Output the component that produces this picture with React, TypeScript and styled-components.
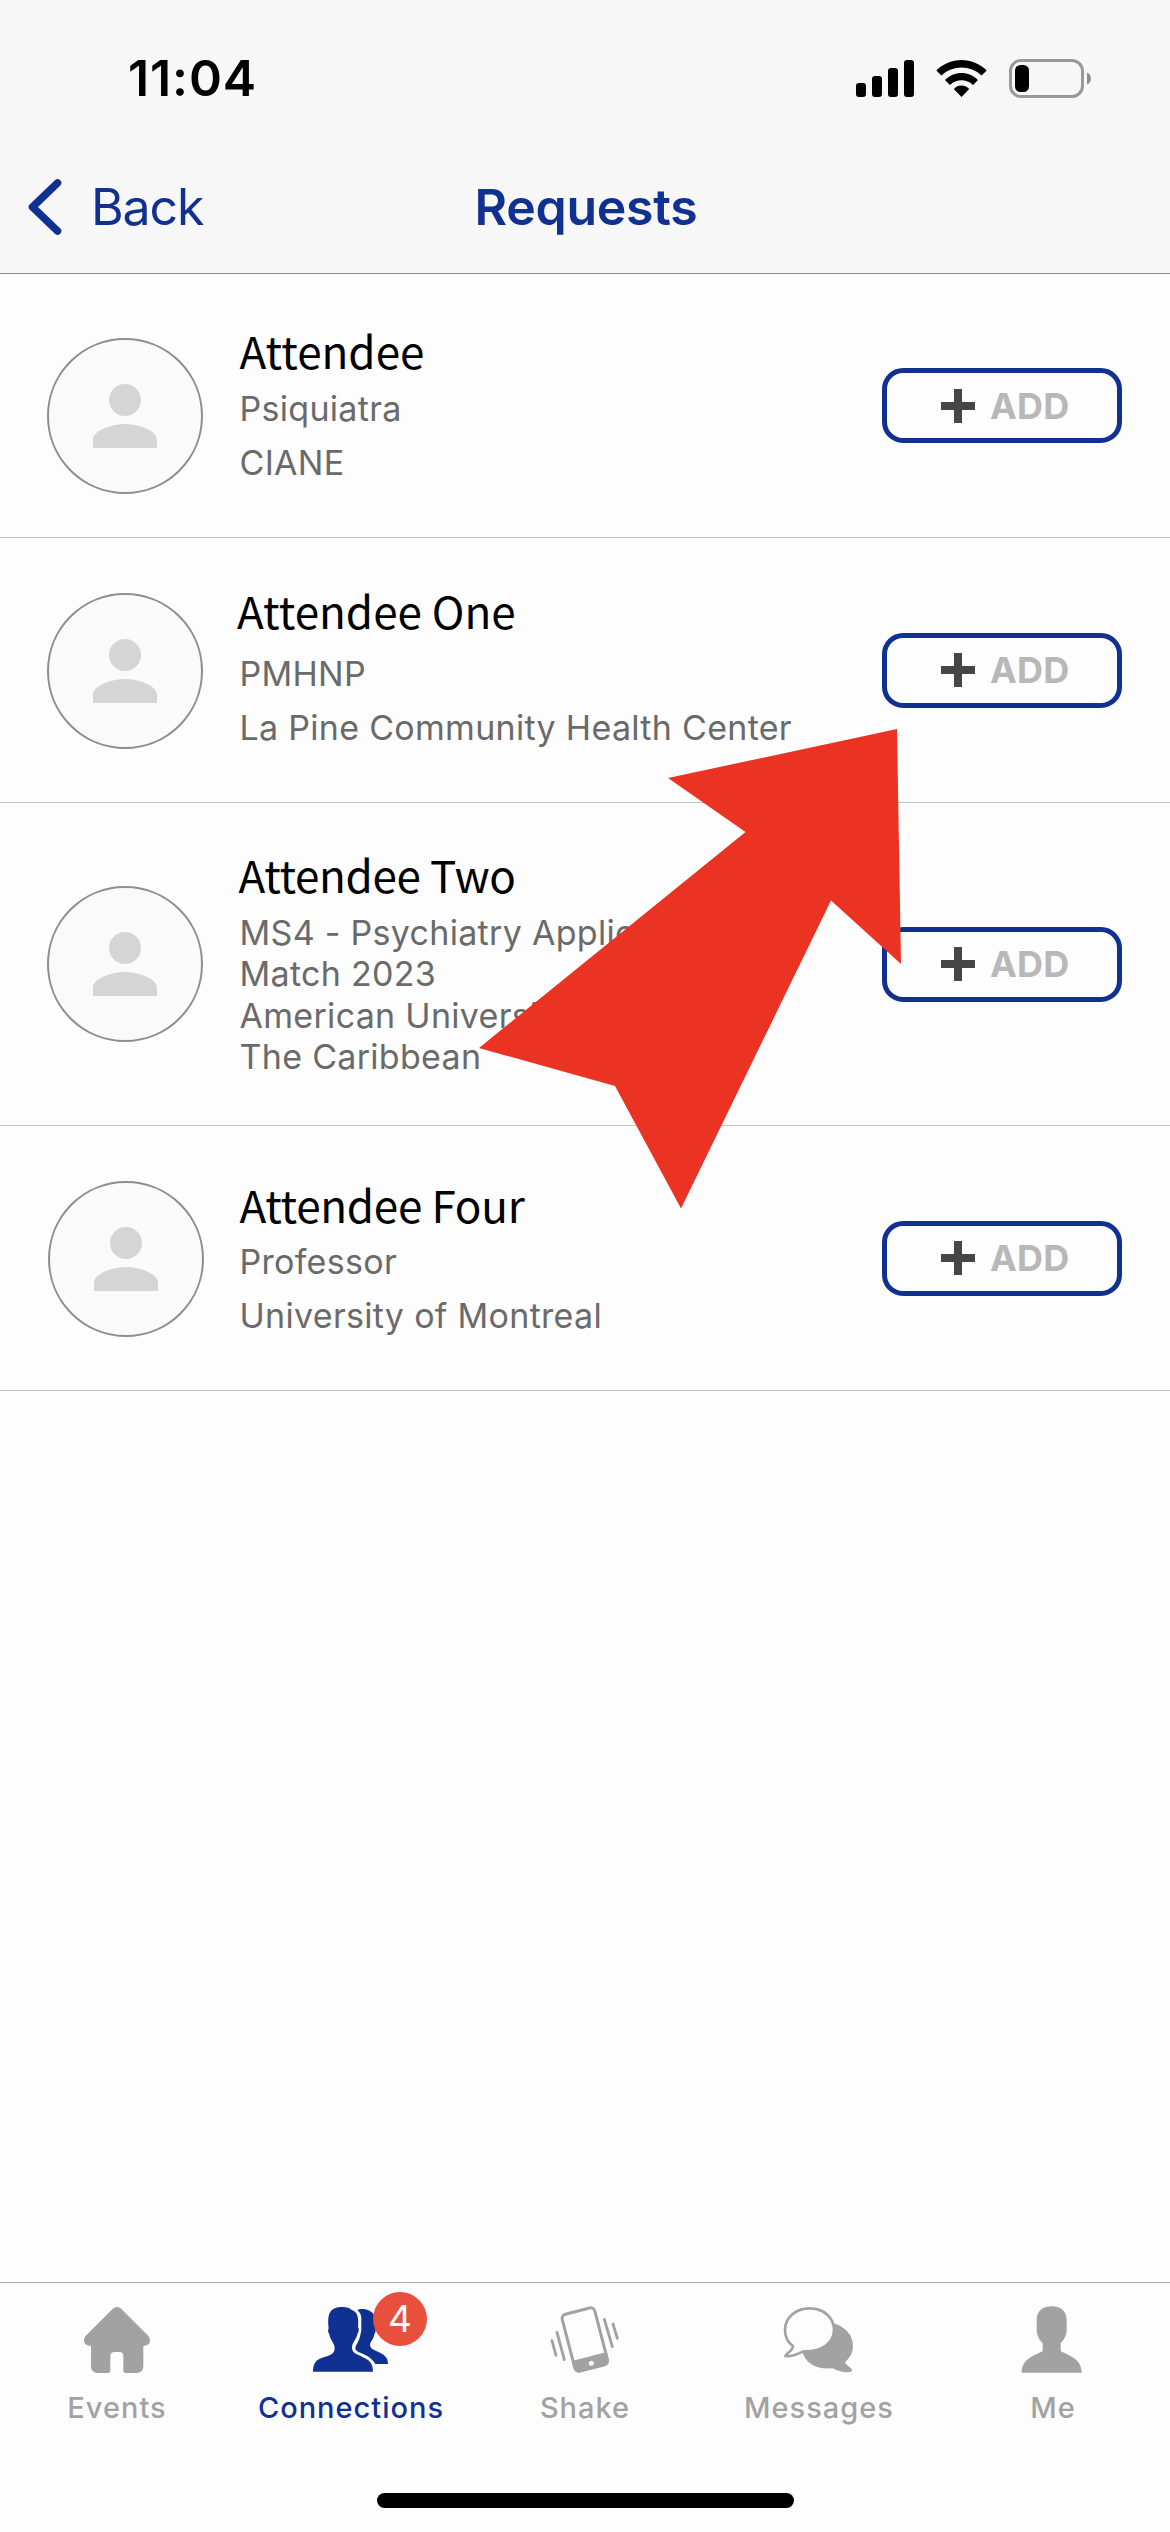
import React from "react";
import styled, { createGlobalStyle } from "styled-components";

const BLUE = "#113192";
const GREY = "#a2a2a2";

const GlobalStyle = createGlobalStyle`
  * { box-sizing: border-box; }
  body { margin: 0; background: #fdfdfd; }
`;

const Screen = styled.div`
  position: relative;
  display: flex;
  flex-direction: column;
  width: 1170px;
  height: 2532px;
  overflow: hidden;
  background: #fdfdfd;
  font-family: Inter, "Liberation Sans", sans-serif;
`;

const Header = styled.header`
  height: 274px;
  background: #f7f7f7;
  border-bottom: 1px solid #8e8e8e;
`;

const StatusBar = styled.div`
  display: flex;
  align-items: center;
  justify-content: space-between;
  height: 156px;
  padding: 0 79px 0 128px;
`;

const Clock = styled.span`
  font-size: 50px;
  font-weight: 600;
  line-height: 60px;
  letter-spacing: 0.9px;
  color: #000;
`;

const StatusIcons = styled.div`
  display: flex;
  align-items: center;
  gap: 22px;

  svg { display: block; }
`;

const NavBar = styled.nav`
  display: grid;
  grid-template-columns: 1fr auto 1fr;
  align-items: center;
  height: 102px;
  padding: 0 26px 0 28px;
`;

const BackButton = styled.button`
  display: flex;
  align-items: center;
  gap: 26px;
  padding: 0;
  border: 0;
  background: none;
  color: ${BLUE};
  font: 400 50px/60px Inter, "Liberation Sans", sans-serif;
  letter-spacing: -1.1px;
`;

const Title = styled.h1`
  margin: 0;
  font-size: 50px;
  font-weight: 600;
  line-height: 60px;
  letter-spacing: -0.25px;
  color: ${BLUE};
`;

const List = styled.main`
  flex: 1;
`;

const Row = styled.section<{ $height: number }>`
  display: flex;
  height: ${(p) => p.$height}px;
  padding-right: 48px;
  border-bottom: 1px solid #c4c4c4;
`;

const Avatar = styled.div<{ $top: number; $left: number }>`
  display: flex;
  align-items: center;
  justify-content: center;
  flex: none;
  width: 156px;
  height: 156px;
  margin: ${(p) => p.$top}px 0 0 ${(p) => p.$left}px;
  border: 2px solid #8e8e8e;
  border-radius: 50%;
  background: #fafafa;
`;

const Info = styled.div<{ $top: number; $left: number }>`
  flex: 1;
  min-width: 0;
  padding: ${(p) => p.$top}px 0 0 ${(p) => p.$left}px;
`;

const Name = styled.h2<{ $tracking: number }>`
  margin: 0;
  font-family: "Noto Sans CJK SC", "Noto Sans", sans-serif;
  font-size: 44px;
  font-weight: 400;
  line-height: 46px;
  letter-spacing: ${(p) => p.$tracking}px;
  color: #000;
`;

const Details = styled.div<{ $top: number; $left: number; $gap: number }>`
  display: flex;
  flex-direction: column;
  gap: ${(p) => p.$gap}px;
  margin: ${(p) => p.$top}px 0 0 ${(p) => p.$left}px;
`;

const Detail = styled.p`
  margin: 0;
  font-size: 34px;
  line-height: 41.5px;
  letter-spacing: 0.3px;
  white-space: pre-line;
  color: #6a6a6a;
`;

const AddButton = styled.button`
  display: flex;
  align-items: center;
  align-self: center;
  gap: 15px;
  flex: none;
  width: 240px;
  height: 75px;
  padding: 0 0 0 54px;
  border: 5px solid ${BLUE};
  border-radius: 21px;
  background: none;
  color: #b8b8b8;
  font: 700 36px/44px Inter, "Liberation Sans", sans-serif;
  letter-spacing: 0.2px;
`;

const TabBar = styled.footer`
  display: flex;
  flex-direction: column;
  justify-content: space-between;
  align-items: center;
  height: 250px;
  padding-bottom: 24px;
  border-top: 1px solid #a8a8a8;
`;

const Tabs = styled.div`
  display: grid;
  grid-template-columns: repeat(5, 1fr);
  width: 100%;
  padding-top: 20px;
`;

const Tab = styled.div<{ $active?: boolean }>`
  display: flex;
  flex-direction: column;
  align-items: center;
  gap: 9px;
  color: ${(p) => (p.$active ? BLUE : GREY)};
  font-size: 29px;
  font-weight: 500;
  line-height: 40px;
  letter-spacing: 1px;
`;

const TabIcon = styled.div`
  position: relative;
  width: 76px;
  height: 76px;

  svg { display: block; }
`;

const Badge = styled.span`
  position: absolute;
  top: -11px;
  left: 60px;
  width: 54px;
  height: 54px;
  border-radius: 50%;
  background: #e84f3d;
  color: #fff;
  font-size: 37px;
  font-weight: 400;
  line-height: 53px;
  letter-spacing: 0;
  text-align: center;
`;

const HomeIndicator = styled.div`
  width: 417px;
  height: 15px;
  border-radius: 8px;
  background: #000;
`;

const Pointer = styled.svg`
  position: absolute;
  top: 0;
  left: 0;
  pointer-events: none;
`;

const SignalIcon = () => (
  <svg width="58" height="37" viewBox="0 0 58 37">
    <rect x="0" y="23" width="10" height="14" rx="3" />
    <rect x="16" y="16" width="10" height="21" rx="3" />
    <rect x="32" y="8" width="10" height="29" rx="3" />
    <rect x="48" y="0" width="10" height="37" rx="3" />
  </svg>
);

const WifiIcon = () => (
  <svg width="51" height="37" viewBox="0 0 51 37">
    <path d="M.3 10.6C14-3.5 37-3.5 50.7 10.6L45.6 15.6C34.5 4.7 16.5 4.7 5.4 15.6Z" />
    <path d="M9 20C18 10.5 33 10.5 42 20L37 25C30.5 18.8 20.5 18.8 14 25Z" />
    <path d="M17.8 28.9C22 24.4 29 24.4 33.2 28.9L25.5 37Z" />
  </svg>
);

const BatteryIcon = () => (
  <svg width="82" height="39" viewBox="0 0 82 39">
    <rect x="1.5" y="1.5" width="72" height="36" rx="10.5" fill="none" stroke="#999" strokeWidth="3" />
    <rect x="6" y="6" width="14" height="27" rx="5.5" />
    <path d="M78 13.5C83.3 15.5 83.3 23.5 78 25.5Z" fill="#8e8e8e" />
  </svg>
);

const ChevronIcon = () => (
  <svg width="37" height="60" viewBox="0 0 37 60">
    <path d="M29.5 6L4.5 30L29.5 54" fill="none" stroke={BLUE} strokeWidth="7.6" strokeLinecap="round" strokeLinejoin="round" />
  </svg>
);

const PersonIcon = () => (
  <svg width="96" height="96" viewBox="0 0 24 24" fill="#d5d5d5">
    <path d="M12 12c2.21 0 4-1.79 4-4s-1.79-4-4-4-4 1.79-4 4 1.79 4 4 4zm0 2c-2.67 0-8 1.34-8 4v2h16v-2c0-2.66-5.33-4-8-4z" />
  </svg>
);

const PlusIcon = () => (
  <svg width="34" height="34" viewBox="0 0 34 34" fill="#464646">
    <path d="M13 0h8v13h13v8H21v13h-8V21H0v-8h13z" />
  </svg>
);

const HomeIcon = () => (
  <svg width="76" height="76" viewBox="237 129 228 228" fill="currentColor">
    <path d="M340 145Q351 137 362 145L446 229Q450 235 450 241C450 252 442 258 430 258V318Q430 339 409 339H377Q370 339 370 331V288Q370 276 358 276H344Q331 276 331 288V331Q331 339 324 339H294Q273 339 273 318V258C260 258 252 252 252 241Q252 235 256 229Z" />
  </svg>
);

const ConnectionsIcon = () => (
  <svg width="76" height="76" viewBox="939 129 228 228" fill="currentColor">
    <path d="M1028 141C1040 141 1050 144 1055 150C1072 155 1077 172 1074 202C1078 206 1077 214 1073 220C1070 236 1056 250 1056 262C1056 280 1068 281 1086 290C1108 299 1119 309 1119 335H939C939 310 948 299 971 292C992 286 1004 281 1004 264C1004 250 990 240 988 222C984 218 983 210 986 205C982 165 986 141 1028 141Z" />
    <path d="M1072 150C1082 145 1100 147 1108 152C1124 158 1130 178 1126 205C1129 211 1126 219 1123 222C1121 240 1110 244 1110 256C1112 268 1124 271 1140 278C1156 286 1164 294 1164 312H1126C1116 295 1104 288 1088 281C1074 276 1066 272 1066 264C1068 252 1078 244 1081 224C1086 210 1083 202 1084 180C1085 165 1080 158 1072 150Z" />
  </svg>
);

const ShakeIcon = () => (
  <svg width="76" height="76" viewBox="321 129 228 228" fill="none" stroke="currentColor" strokeWidth="9" strokeLinecap="round">
    <g transform="translate(434.5 238.5) rotate(-14.5)">
      <rect x="-50.5" y="-88" width="101" height="176" rx="13" />
      <path d="M-54 53H54V76Q54 92 38 92H-38Q-54 92-54 76Z" fill="currentColor" stroke="none" />
      <circle cx="1" cy="74" r="7.5" fill="#fdfdfd" stroke="none" />
    </g>
    <path d="M351 217L373 299M336 242L348 286M493 178L517 260M519 192L532 235" strokeWidth="8.5" />
  </svg>
);

const MessagesIcon = () => (
  <svg width="76" height="76" viewBox="183 129 228 228" fill="currentColor">
    <path d="M341 190C375 200 399 225 399 257C399 280 388 295 375 306C380 318 394 322 397 331C392 342 360 337 338 325C290 330 255 308 247 275Z" />
    <path
      d="M219 258C202 246 195 228 195 210C195 172 228 145 269 145C310 145 342 172 342 210C342 247 308 276 250 274C232 283 210 290 196 288C196 282 220 272 219 258Z"
      fill="#fdfdfd"
      stroke="currentColor"
      strokeWidth="8"
      strokeLinejoin="round"
    />
  </svg>
);

const MeIcon = () => (
  <svg width="76" height="76" viewBox="885 129 228 228" fill="currentColor">
    <path d="M950 180C950 152 970 139 995 139C1020 139 1040 152 1040 180V208C1040 230 1030 241 1022 250V273C1037 284 1085 292 1085 338H905C905 292 953 284 968 273V250C960 241 950 230 950 208Z" />
  </svg>
);

type Attendee = {
  name: string;
  details: string[];
  height: number;
  avatar: [number, number];
  nameAt: [number, number];
  tracking: number;
  detailsTop: number;
  gap: number;
};

const DETAILS_X = 239.5;
const AVATAR_SIZE = 156;

const attendees: Attendee[] = [
  { name: "Attendee", details: ["Psiquiatra", "CIANE"], height: 264, avatar: [64, 47], nameAt: [53, 36.5], tracking: 0, detailsTop: 15, gap: 12.2 },
  { name: "Attendee One", details: ["PMHNP", "La Pine Community Health Center"], height: 265, avatar: [55, 47], nameAt: [49, 34], tracking: 0, detailsTop: 20, gap: 12.2 },
  { name: "Attendee Two", details: ["MS4 - Psychiatry Applicant\nMatch 2023", "American University of\nThe Caribbean"], height: 323, avatar: [83, 47], nameAt: [47.5, 35.5], tracking: -0.35, detailsTop: 15, gap: 0.4 },
  { name: "Attendee Four", details: ["Professor", "University of Montreal"], height: 265, avatar: [55, 48], nameAt: [54.5, 35.5], tracking: -0.3, detailsTop: 14.5, gap: 12.5 },
];

const tabs = [
  { label: "Events", Icon: HomeIcon },
  { label: "Connections", Icon: ConnectionsIcon, badge: 4 },
  { label: "Shake", Icon: ShakeIcon },
  { label: "Messages", Icon: MessagesIcon },
  { label: "Me", Icon: MeIcon },
];

export default function App() {
  return (
    <Screen>
      <GlobalStyle />
      <Header>
        <StatusBar>
          <Clock>11:04</Clock>
          <StatusIcons>
            <SignalIcon />
            <WifiIcon />
            <BatteryIcon />
          </StatusIcons>
        </StatusBar>
        <NavBar>
          <BackButton>
            <ChevronIcon />
            Back
          </BackButton>
          <Title>Requests</Title>
        </NavBar>
      </Header>
      <List>
        {attendees.map((a) => (
          <Row key={a.name} $height={a.height}>
            <Avatar $top={a.avatar[0]} $left={a.avatar[1]}>
              <PersonIcon />
            </Avatar>
            <Info $top={a.nameAt[0]} $left={a.nameAt[1]}>
              <Name $tracking={a.tracking}>{a.name}</Name>
              <Details
                $top={a.detailsTop}
                $left={DETAILS_X - a.avatar[1] - AVATAR_SIZE - a.nameAt[1]}
                $gap={a.gap}
              >
                {a.details.map((d) => (
                  <Detail key={d}>{d}</Detail>
                ))}
              </Details>
            </Info>
            <AddButton>
              <PlusIcon />
              ADD
            </AddButton>
          </Row>
        ))}
      </List>
      <TabBar>
        <Tabs>
          {tabs.map(({ label, Icon, badge }) => (
            <Tab key={label} $active={label === "Connections"}>
              <TabIcon>
                <Icon />
                {badge && <Badge>{badge}</Badge>}
              </TabIcon>
              {label}
            </Tab>
          ))}
        </Tabs>
        <HomeIndicator />
      </TabBar>
      <Pointer width="1170" height="2532" viewBox="0 0 1170 2532">
        <path d="M897 729L901 964L831 900.5L681 1208.5L615 1086L479 1048L745.5 832L668 778Z" fill="#ea3323" />
      </Pointer>
    </Screen>
  );
}
